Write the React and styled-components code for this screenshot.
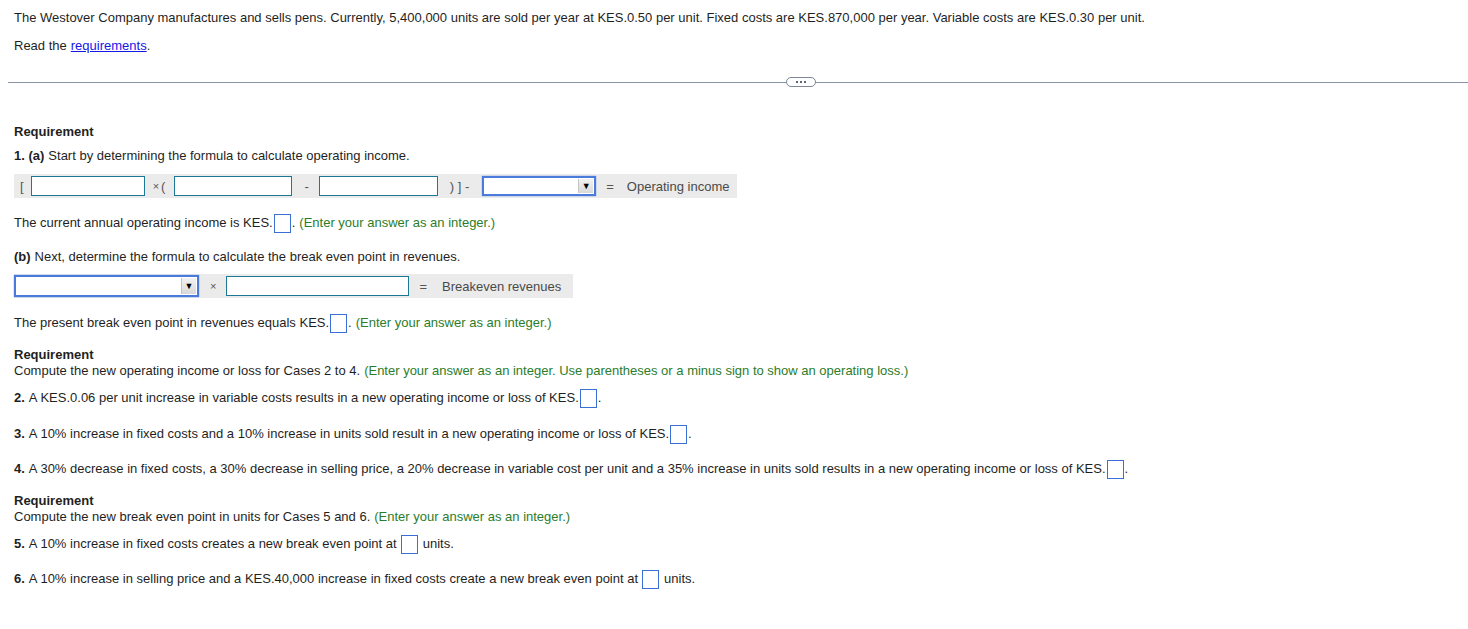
import React from 'react';
import styled, { createGlobalStyle } from 'styled-components';

const textColor = '#1f1f1f';
const green = '#2b7d2b';
const teal = '#1c7896';
const focusBlue = '#4a7bdc';
const answerBlue = '#3a6fd6';
const formulaGrey = '#ebebeb';

const GlobalStyle = createGlobalStyle`
  html, body {
    margin: 0;
    padding: 0;
    background: #fff;
  }
  body {
    font-family: "Liberation Sans", Arial, sans-serif;
    font-size: 13px;
    color: ${textColor};
  }
`;

const Page = styled.div`
  padding: 10px 0 0 14px;
  width: 1454px;
`;

const Line = styled.div`
  line-height: ${p => (p.tall ? '20px' : '16px')};
  margin-top: ${p => p.mt || 0}px;
  white-space: nowrap;
  display: flex;
  align-items: center;
`;

const Link = styled.a`
  color: #1616e6;
  text-decoration: underline;
  margin-left: 4px;
  cursor: pointer;
`;

const Hint = styled.span`
  color: ${green};
  margin-left: 4px;
`;

const B = styled.b`
  font-weight: bold;
  margin-right: 4px;
`;

const Divider = styled.div`
  margin: 22px 0 0 -6px;
  height: 12px;
  display: flex;
  align-items: center;
  &::before, &::after {
    content: '';
    flex: 1;
    height: 1px;
    background: #8a93a3;
  }
  &::before {
    flex: 0 0 778px;
  }
`;

const Pill = styled.div`
  width: 28px;
  height: 8px;
  border: 1px solid #7b8595;
  border-radius: 5px;
  display: flex;
  align-items: center;
  justify-content: center;
  gap: 2px;
  background: #fff;
  span {
    width: 2px;
    height: 2px;
    background: #5b6575;
  }
`;

const Heading = styled.div`
  font-weight: bold;
  line-height: 16px;
  margin-top: ${p => p.mt || 0}px;
`;

const Formula = styled.div`
  display: inline-flex;
  align-items: center;
  background: ${formulaGrey};
  height: 24px;
  padding: ${p => p.pad || '0 8px 0 6px'};
  margin-top: ${p => p.mt || 0}px;
  color: #555;
`;

const Op = styled.span`
  font-size: ${p => p.size || 13}px;
  margin: 0 ${p => p.r || 0}px 0 ${p => p.l || 0}px;
  color: ${p => p.c || '#555'};
  white-space: pre;
`;

const Blank = styled.div`
  box-sizing: border-box;
  width: ${p => p.w}px;
  height: 20px;
  border: 1px solid ${teal};
  background: #fff;
`;

const Select = styled.div`
  box-sizing: border-box;
  width: ${p => p.w}px;
  height: ${p => (p.big ? 22 : 20)}px;
  border: 2px solid ${focusBlue};
  box-shadow: 0 0 1px ${focusBlue};
  background: #fff;
  display: flex;
  justify-content: flex-end;
  padding: 1px;
`;

const Arrow = styled.div`
  width: 14px;
  background: linear-gradient(#f2f2f2, #d9d9d9);
  border-left: 1px solid #c4c4c4;
  display: flex;
  align-items: center;
  justify-content: center;
  font-size: 9px;
  color: #000;
`;

const Answer = styled.span`
  box-sizing: border-box;
  display: inline-block;
  width: 17px;
  height: 19px;
  border: 1px solid ${answerBlue};
  margin: 0 ${p => p.r || 1}px 0 ${p => p.l || 1}px;
  background: #fff;
`;

export default function App() {
  return (
    <>
      <GlobalStyle />
      <Page>
        <Line>
          The Westover Company manufactures and sells pens. Currently, 5,400,000 units are sold per year at KES.0.50 per unit. Fixed costs are KES.870,000 per year. Variable costs are KES.0.30 per unit.
        </Line>
        <Line mt={12}>
          Read the<Link>requirements</Link>.
        </Line>
        <Divider>
          <Pill><span /><span /><span /></Pill>
        </Divider>

        <Heading mt={36}>Requirement</Heading>
        <Line mt={8}>
          <B>1. (a)</B>Start by determining the formula to calculate operating income.
        </Line>
        <div>
          <Formula mt={10}>
            <Op l={0} r={7}>[</Op>
            <Blank w={114} />
            <Op l={8} r={2} size={11}>×</Op>
            <Op r={9}>(</Op>
            <Blank w={118} />
            <Op l={12} r={10}>-</Op>
            <Blank w={119} />
            <Op l={12} r={13}>) ] -</Op>
            <Select w={114}><Arrow>▼</Arrow></Select>
            <Op l={10} r={13}>=</Op>
            <Op c="#4a4a4a">Operating income</Op>
          </Formula>
        </div>

        <Line tall mt={15}>
          The current annual operating income is KES.<Answer />.<Hint>(Enter your answer as an integer.)</Hint>
        </Line>
        <Line mt={16}>
          <B>(b)</B>Next, determine the formula to calculate the break even point in revenues.
        </Line>
        <div>
          <Formula mt={9} pad="0 12px 0 0">
            <Select w={185} big><Arrow>▼</Arrow></Select>
            <Op l={11} r={10} size={11}>×</Op>
            <Blank w={183} />
            <Op l={10} r={15}>=</Op>
            <Op c="#4a4a4a">Breakeven revenues</Op>
          </Formula>
        </div>
        <Line tall mt={15}>
          The present break even point in revenues equals KES.<Answer />.<Hint>(Enter your answer as an integer.)</Hint>
        </Line>

        <Heading mt={14}>Requirement</Heading>
        <Line>
          Compute the new operating income or loss for Cases 2 to 4.<Hint>(Enter your answer as an integer. Use parentheses or a minus sign to show an operating loss.)</Hint>
        </Line>
        <Line tall mt={9}>
          <B>2.</B>A KES.0.06 per unit increase in variable costs results in a new operating income or loss of KES.<Answer />.
        </Line>
        <Line tall mt={16}>
          <B>3.</B>A 10% increase in fixed costs and a 10% increase in units sold result in a new operating income or loss of KES.<Answer />.
        </Line>
        <Line tall mt={15}>
          <B>4.</B>A 30% decrease in fixed costs, a 30% decrease in selling price, a 20% decrease in variable cost per unit and a 35% increase in units sold results in a new operating income or loss of KES.<Answer />.
        </Line>

        <Heading mt={14}>Requirement</Heading>
        <Line>
          Compute the new break even point in units for Cases 5 and 6.<Hint>(Enter your answer as an integer.)</Hint>
        </Line>
        <Line tall mt={9}>
          <B>5.</B>A 10% increase in fixed costs creates a new break even point at<Answer l={4} r={5} />units.
        </Line>
        <Line tall mt={15}>
          <B>6.</B>A 10% increase in selling price and a KES.40,000 increase in fixed costs create a new break even point at<Answer l={4} r={5} />units.
        </Line>
      </Page>
    </>
  );
}
